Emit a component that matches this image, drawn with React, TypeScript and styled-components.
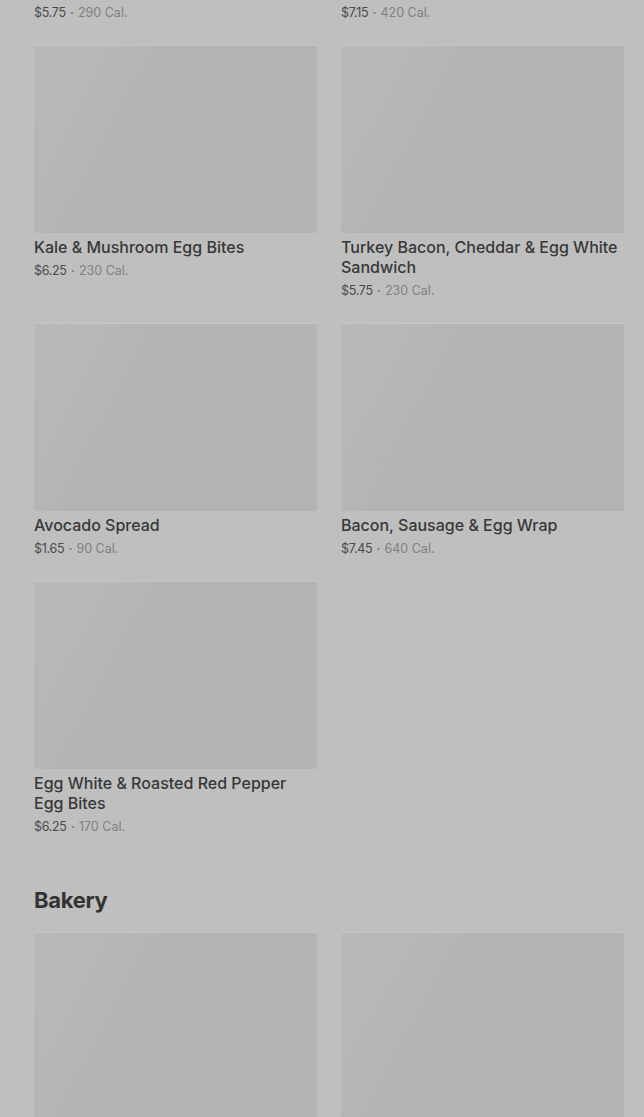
import styled, { createGlobalStyle } from 'styled-components';

interface IProduct {
  id: string;
  name: string;
  price: string;
  calories: number;
}

interface ISection {
  title: string;
  products: IProduct[];
}

const sections: ISection[] = [
  {
    title: 'Hot Breakfast',
    products: [
      { id: 'spinach-feta', name: 'Spinach, Feta & Egg White Wrap', price: '$5.75', calories: 290 },
      { id: 'impossible', name: 'Impossible Breakfast Sandwich', price: '$7.15', calories: 420 },
      { id: 'kale-mushroom', name: 'Kale & Mushroom Egg Bites', price: '$6.25', calories: 230 },
      { id: 'turkey-bacon', name: 'Turkey Bacon, Cheddar & Egg White Sandwich', price: '$5.75', calories: 230 },
      { id: 'avocado', name: 'Avocado Spread', price: '$1.65', calories: 90 },
      { id: 'bacon-sausage', name: 'Bacon, Sausage & Egg Wrap', price: '$7.45', calories: 640 },
      { id: 'red-pepper', name: 'Egg White & Roasted Red Pepper Egg Bites', price: '$6.25', calories: 170 },
    ],
  },
  {
    title: 'Bakery',
    products: [
      { id: 'croissant', name: 'Butter Croissant', price: '$3.45', calories: 260 },
      { id: 'banana-bread', name: 'Banana Nut Bread', price: '$3.75', calories: 420 },
    ],
  },
];

export default function App() {
  return (
    <>
      <GlobalStyle />
      <Viewport>
        <Main>
          {sections.map((section) => (
            <Section key={section.title}>
              <SectionTitle>{section.title}</SectionTitle>
              <Grid>
                {section.products.map((p) => (
                  <Card key={p.id}>
                    <Thumb />
                    <Name>{p.name}</Name>
                    <Meta>
                      <Price>{p.price}</Price>
                      <Dot>·</Dot>
                      <Cal>{p.calories} Cal.</Cal>
                    </Meta>
                  </Card>
                ))}
              </Grid>
            </Section>
          ))}
        </Main>
      </Viewport>
    </>
  );
}

const GlobalStyle = createGlobalStyle`
  html, body {
    margin: 0;
    padding: 0;
    background: #bfbfbf;
    font-family: Inter, 'Noto Sans', 'Liberation Sans', sans-serif;
  }
  * {
    box-sizing: border-box;
  }
`;

const Viewport = styled.div`
  height: 1117px;
  overflow: hidden;
  background: #bfbfbf;
`;

// page is scrolled part way down the menu
const Main = styled.main`
  margin-top: -259px;
  padding: 0 20px 40px 34px;
  display: flex;
  flex-direction: column;
  gap: 50px;
`;

const Section = styled.section`
  display: flex;
  flex-direction: column;
`;

const SectionTitle = styled.h2`
  margin: 0 0 19px;
  font-size: 22px;
  line-height: 28px;
  font-weight: 700;
  letter-spacing: -0.3px;
  color: #333333;
`;

const Grid = styled.div`
  display: grid;
  grid-template-columns: 1fr 1fr;
  column-gap: 24px;
  row-gap: 24px;
`;

const Card = styled.div`
  display: flex;
  flex-direction: column;
  min-width: 0;
`;

const Thumb = styled.div`
  height: 187px;
  border-radius: 2px;
  background: linear-gradient(
    118deg,
    #b8b8b8 0%,
    #b7b7b7 22%,
    #b3b3b3 34%,
    #b3b3b3 100%
  );
  box-shadow: 0 -1px 0 rgba(255, 255, 255, 0.12);
`;

const Name = styled.div`
  margin-top: 4px;
  font-size: 16px;
  line-height: 20px;
  font-weight: 500;
  color: #383838;
`;

const Meta = styled.div`
  margin-top: 5px;
  font-size: 12.5px;
  line-height: 18px;
  white-space: nowrap;
`;

const Price = styled.span`
  color: #4a4a4a;
  letter-spacing: -0.3px;
`;

const Dot = styled.span`
  margin: 0 4px;
  color: #7f7f7f;
  font-weight: 700;
`;

const Cal = styled.span`
  color: #808080;
`;
